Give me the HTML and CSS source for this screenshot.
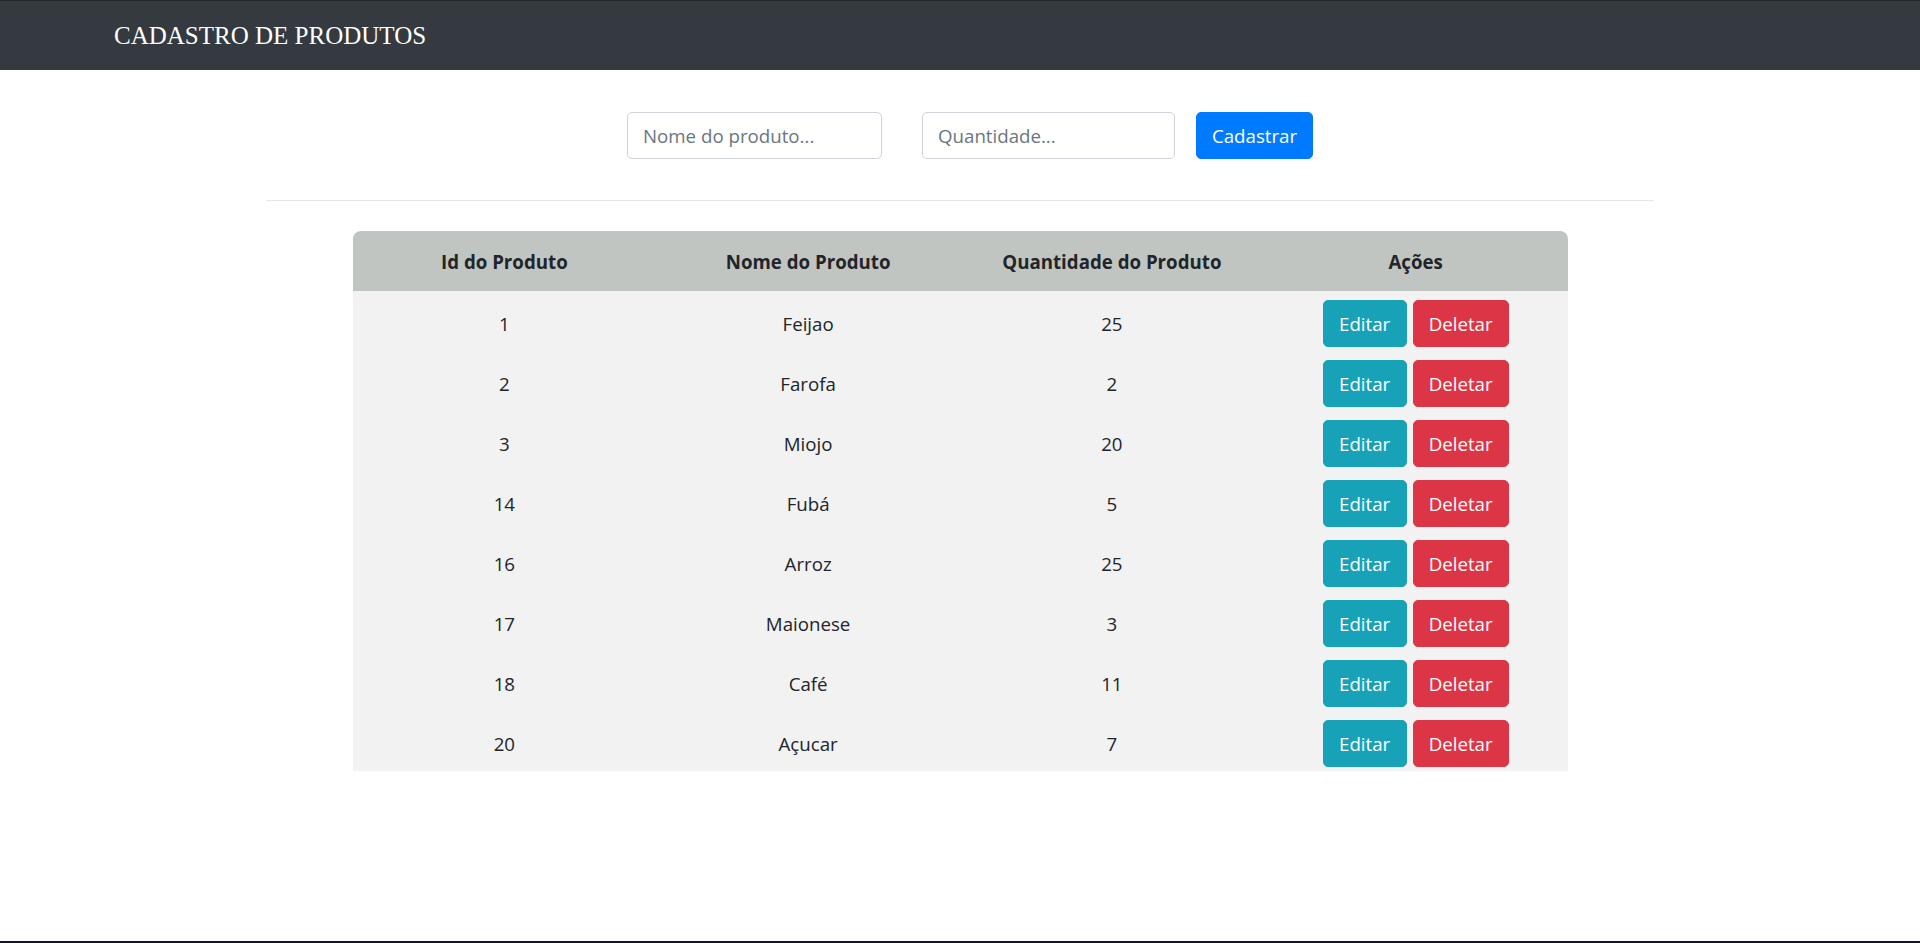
FILE: index.html
```html
<!DOCTYPE html>
<html lang="pt-BR">
<head>
<meta charset="utf-8">
<title>Cadastro de Produtos</title>
<link rel="stylesheet" href="styles.css">
</head>
<body>
<header class="navbar">
  <span class="brand">CADASTRO DE PRODUTOS</span>
</header>
<main>
  <form class="form-row" onsubmit="return false">
    <input class="field field-name" type="text" placeholder="Nome do produto...">
    <input class="field field-qty" type="text" placeholder="Quantidade...">
    <button class="btn btn-primary" type="submit">Cadastrar</button>
  </form>
  <hr class="divider">
  <table class="products">
    <thead>
      <tr>
        <th>Id do Produto</th>
        <th>Nome do Produto</th>
        <th>Quantidade do Produto</th>
        <th>Ações</th>
      </tr>
    </thead>
    <tbody>
      <tr><td>1</td><td>Feijao</td><td>25</td><td class="actions"><button class="btn btn-info">Editar</button><button class="btn btn-danger">Deletar</button></td></tr>
      <tr><td>2</td><td>Farofa</td><td>2</td><td class="actions"><button class="btn btn-info">Editar</button><button class="btn btn-danger">Deletar</button></td></tr>
      <tr><td>3</td><td>Miojo</td><td>20</td><td class="actions"><button class="btn btn-info">Editar</button><button class="btn btn-danger">Deletar</button></td></tr>
      <tr><td>14</td><td>Fubá</td><td>5</td><td class="actions"><button class="btn btn-info">Editar</button><button class="btn btn-danger">Deletar</button></td></tr>
      <tr><td>16</td><td>Arroz</td><td>25</td><td class="actions"><button class="btn btn-info">Editar</button><button class="btn btn-danger">Deletar</button></td></tr>
      <tr><td>17</td><td>Maionese</td><td>3</td><td class="actions"><button class="btn btn-info">Editar</button><button class="btn btn-danger">Deletar</button></td></tr>
      <tr><td>18</td><td>Café</td><td>11</td><td class="actions"><button class="btn btn-info">Editar</button><button class="btn btn-danger">Deletar</button></td></tr>
      <tr><td>20</td><td>Açucar</td><td>7</td><td class="actions"><button class="btn btn-info">Editar</button><button class="btn btn-danger">Deletar</button></td></tr>
    </tbody>
  </table>
</main>
<div class="screen-edge"></div>
</body>
</html>
```

FILE: styles.css
```css
* { box-sizing: border-box; }

html, body {
  margin: 0;
  padding: 0;
  background: #ffffff;
}

body {
  font-family: "Open Sans", "Noto Sans", "Liberation Sans", sans-serif;
  font-size: 18.7px;
  color: #212529;
  min-height: 943px;
}

.navbar {
  height: 70px;
  background: #343a40;
  border-top: 1px solid #23272b;
  display: flex;
  align-items: center;
  padding-left: 114px;
}

.brand {
  font-family: "Liberation Serif", "Times New Roman", serif;
  font-size: 25px;
  line-height: 37px;
  color: #ffffff;
}

.form-row {
  display: flex;
  justify-content: center;
  align-items: center;
  padding-top: 42px;
  padding-left: 20px;
  margin: 0;
}

.field {
  width: 255px;
  height: 47px;
  border: 1px solid #ced4da;
  border-radius: 5px;
  padding: 0 15px;
  font-family: inherit;
  font-size: 18.7px;
  color: #495057;
  background: #fff;
  outline: none;
}

.field::placeholder { color: #6c757d; opacity: 1; }

.field-name { margin-right: 40px; }
.field-qty { width: 253px; margin-right: 21px; }

.btn {
  display: inline-flex;
  align-items: center;
  justify-content: center;
  height: 47px;
  padding: 0 15px;
  border: 1px solid transparent;
  border-radius: 5px;
  font-family: inherit;
  font-size: 18.7px;
  color: #ffffff;
  cursor: pointer;
  vertical-align: top;
}

.btn-primary { background: #007bff; border-color: #007bff; width: 117px; }
.btn-info { background: #17a2b8; border-color: #17a2b8; width: 84px; }
.btn-danger { background: #dc3545; border-color: #dc3545; width: 96px; margin-left: 6px; }

.divider {
  width: 1388px;
  margin: 41px auto 0;
  border: 0;
  border-top: 1px solid #e6e6e6;
  height: 0;
}

.products {
  width: 1215px;
  margin: 30px auto 0;
  border-collapse: separate;
  border-spacing: 0;
  table-layout: fixed;
}

.products th {
  width: 25%;
  height: 60px;
  background: #c1c5c1;
  font-weight: 700;
  text-align: center;
  vertical-align: middle;
  padding: 0;
}

.products th:first-child { border-top-left-radius: 8px; }
.products th:last-child { border-top-right-radius: 8px; }

.products td {
  background: #f2f2f2;
  text-align: center;
  vertical-align: top;
  height: 60px;
  padding: 9px 0 4px;
  line-height: 47px;
}

.products td.actions {
  white-space: nowrap;
}

.screen-edge {
  position: fixed;
  left: 0;
  right: 0;
  bottom: 0;
  height: 2px;
  background: #14121c;
}
```
